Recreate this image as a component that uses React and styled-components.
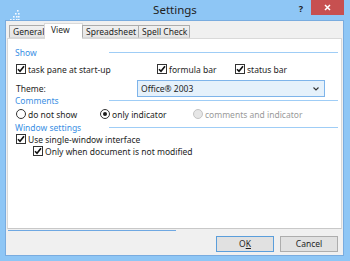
import React from 'react'
import styled, { createGlobalStyle } from 'styled-components'

const Global = createGlobalStyle`
  html, body { margin: 0; padding: 0; background: #8ec6f5; }
  body { font-family: "Noto Sans", "DejaVu Sans", sans-serif; color: #1e1e1e; }
`

const Window = styled.div`
  width: 350px;
  height: 261px;
  background: #8ec6f5;
  display: flex;
  flex-direction: column;
  overflow: hidden;
`
const TitleBar = styled.div`
  height: 20px;
  display: grid;
  grid-template-columns: 1fr auto 1fr;
  align-items: start;
`
const AppIcon = styled.div`
  padding: 4px 0 0 9px;
`
const Title = styled.div`
  font-size: 11.5px;
  line-height: 20px;
  color: #222;
`
const Controls = styled.div`
  display: flex;
  justify-content: flex-end;
  align-items: flex-start;
  padding-right: 6px;
`
const Help = styled.div`
  font-size: 9px;
  font-weight: 700;
  line-height: 17px;
  margin-right: 8px;
  color: #222;
`
const Close = styled.div`
  width: 33px;
  height: 15px;
  background: #c75050;
  display: flex;
  align-items: center;
  justify-content: center;
`
const Client = styled.div`
  flex: 1;
  margin: 0 6px 5px 5px;
  border: 1px solid #79acdf;
  background: #f0f0f0;
  display: flex;
  flex-direction: column;
`
const Tabs = styled.div`
  display: flex;
  align-items: flex-end;
  padding: 2px 0 0 3px;
  height: 15px;
  position: relative;
  z-index: 1;
`
const Tab = styled.div`
  width: ${p => p.$w}px;
  height: ${p => (p.$active ? 16 : 13)}px;
  box-sizing: border-box;
  margin-bottom: ${p => (p.$active ? -1 : 0)}px;
  margin-right: -1px;
  border: 1px solid ${p => (p.$active ? '#d9d9d9' : '#acacac')};
  border-bottom: ${p => (p.$active ? 'none' : '1px solid #d9d9d9')};
  background: ${p => (p.$active ? '#fff' : 'linear-gradient(#f0f0f0, #e5e5e5)')};
  font-size: 8.5px;
  line-height: ${p => (p.$active ? 12 : 11)}px;
  padding-left: ${p => (p.$active ? 6 : 3)}px;
  color: #1e1e1e;
  white-space: nowrap;
`
const Panel = styled.div`
  height: 191px;
  margin: 0 1px;
  box-sizing: border-box;
  background: #fff;
  border: 1px solid #d9d9d9;
  border-bottom-color: #c8c8c8;
  padding: 7px 3px 0 8px;
  display: flex;
  flex-direction: column;
`
const Row = styled.div`
  height: ${p => p.$h}px;
  display: flex;
  align-items: center;
  padding-left: ${p => p.$indent || 0}px;
  font-size: 8.5px;
  white-space: nowrap;
`
const GridRow = styled(Row)`
  display: grid;
  grid-template-columns: ${p => p.$cols};
  align-items: center;
`
const Header = styled(GridRow)`
  color: #3a8fe4;
  margin-left: -1px;
`
const Rule = styled.div`
  height: 1px;
  background: #9fcdf6;
`
const Item = styled.label`
  display: flex;
  align-items: center;
  gap: 2px;
  color: ${p => (p.$disabled ? '#9a9a9a' : '#1e1e1e')};
`
const Box = styled.span`
  width: 10px;
  height: 10px;
  box-sizing: border-box;
  border: 1px solid #333;
  background: #fff;
  display: flex;
  align-items: center;
  justify-content: center;
`
const Radio = styled.span`
  width: 10px;
  height: 10px;
  box-sizing: border-box;
  border-radius: 50%;
  border: 1px solid ${p => (p.$disabled ? '#c4c4c4' : '#333')};
  background: ${p => (p.$disabled ? '#e6e6e6' : '#fff')};
  display: flex;
  align-items: center;
  justify-content: center;
  &::after {
    content: '';
    width: 4px;
    height: 4px;
    border-radius: 50%;
    background: ${p => (p.$on ? '#1a1a1a' : 'transparent')};
  }
`
const Select = styled.div`
  width: 188px;
  height: 17px;
  box-sizing: border-box;
  border: 1px solid #7eb4ea;
  background: #e5f1fb;
  display: flex;
  align-items: center;
  justify-content: space-between;
  padding: 0 5px 0 3px;
  color: #1e1e1e;
`
const Bottom = styled.div`
  flex: 1;
  display: flex;
  flex-direction: column;
`
const FocusLine = styled.div`
  width: 168px;
  height: 1px;
  margin: 1px 0 0 2px;
  background: #6fa8e2;
`
const Buttons = styled.div`
  display: flex;
  justify-content: flex-end;
  gap: 6px;
  margin-top: 5px;
  padding-right: 5px;
`
const Button = styled.div`
  width: ${p => p.$w}px;
  height: 16px;
  box-sizing: border-box;
  border: 1px solid ${p => (p.$default ? '#5b9edb' : '#adadad')};
  background: #e1e1e1;
  font-size: 8.5px;
  line-height: 14px;
  text-align: center;
  color: #1e1e1e;
  & u { text-decoration-thickness: 1px; }
`

const Check = () => (
  <Box>
    <svg width="8" height="8" viewBox="0 0 8 8">
      <path d="M1 4.2 L3 6.3 L7 1.2" fill="none" stroke="#111" strokeWidth="1.6" />
    </svg>
  </Box>
)

const LogoIcon = () => (
  <svg width="11" height="11" viewBox="0 0 11 11">
    {[[8, 0], [6, 3], [9, 3], [4, 6], [7, 6], [9, 6], [1, 9], [4, 9], [7, 9], [9, 9]].map(([x, y], i) => (
      <rect key={i} x={x} y={y} width="1.6" height="1.6" fill="#f4f9ff" />
    ))}
  </svg>
)

const Section = ({ children }) => (
  <Header $h={12} $cols="94px 1fr">
    <span>{children}</span>
    <Rule />
  </Header>
)

export default function App() {
  return (
    <>
      <Global />
      <Window>
        <TitleBar>
          <AppIcon><LogoIcon /></AppIcon>
          <Title>Settings</Title>
          <Controls>
            <Help>?</Help>
            <Close>
              <svg width="7" height="7" viewBox="0 0 7 7">
                <path d="M1 1 L6 6 M6 1 L1 6" stroke="#fff" strokeWidth="1.5" />
              </svg>
            </Close>
          </Controls>
        </TitleBar>
        <Client>
          <Tabs>
            <Tab $w={36}>General</Tab>
            <Tab $w={39} $active>View</Tab>
            <Tab $w={57}>Spreadsheet</Tab>
            <Tab $w={52}>Spell Check</Tab>
          </Tabs>
          <Panel>
            <Section>Show</Section>
            <GridRow $h={22} $cols="141px 78px auto">
              <Item><Check />task pane at start-up</Item>
              <Item><Check />formula bar</Item>
              <Item><Check />status bar</Item>
            </GridRow>
            <GridRow $h={14} $cols="121px auto">
              <span>Theme:</span>
              <Select>
                <span>Office® 2003</span>
                <svg width="6" height="4" viewBox="0 0 6 4">
                  <path d="M0.5 0.5 L3 3 L5.5 0.5" fill="none" stroke="#333" strokeWidth="1.1" />
                </svg>
              </Select>
            </GridRow>
            <Section>Comments</Section>
            <GridRow $h={16} $cols="84px 93px auto">
              <Item><Radio />do not show</Item>
              <Item><Radio $on />only indicator</Item>
              <Item $disabled><Radio $disabled />comments and indicator</Item>
            </GridRow>
            <Header $h={7} $cols="94px 1fr">
              <span>Window settings</span>
              <Rule />
            </Header>
            <Row $h={20}>
              <Item><Check />Use single-window interface</Item>
            </Row>
            <Row $h={4} $indent={17}>
              <Item><Check />Only when document is not modified</Item>
            </Row>
          </Panel>
          <Bottom>
            <FocusLine />
            <Buttons>
              <Button $w={58} $default>O<u>K</u></Button>
              <Button $w={58}>Cancel</Button>
            </Buttons>
          </Bottom>
        </Client>
      </Window>
    </>
  )
}
